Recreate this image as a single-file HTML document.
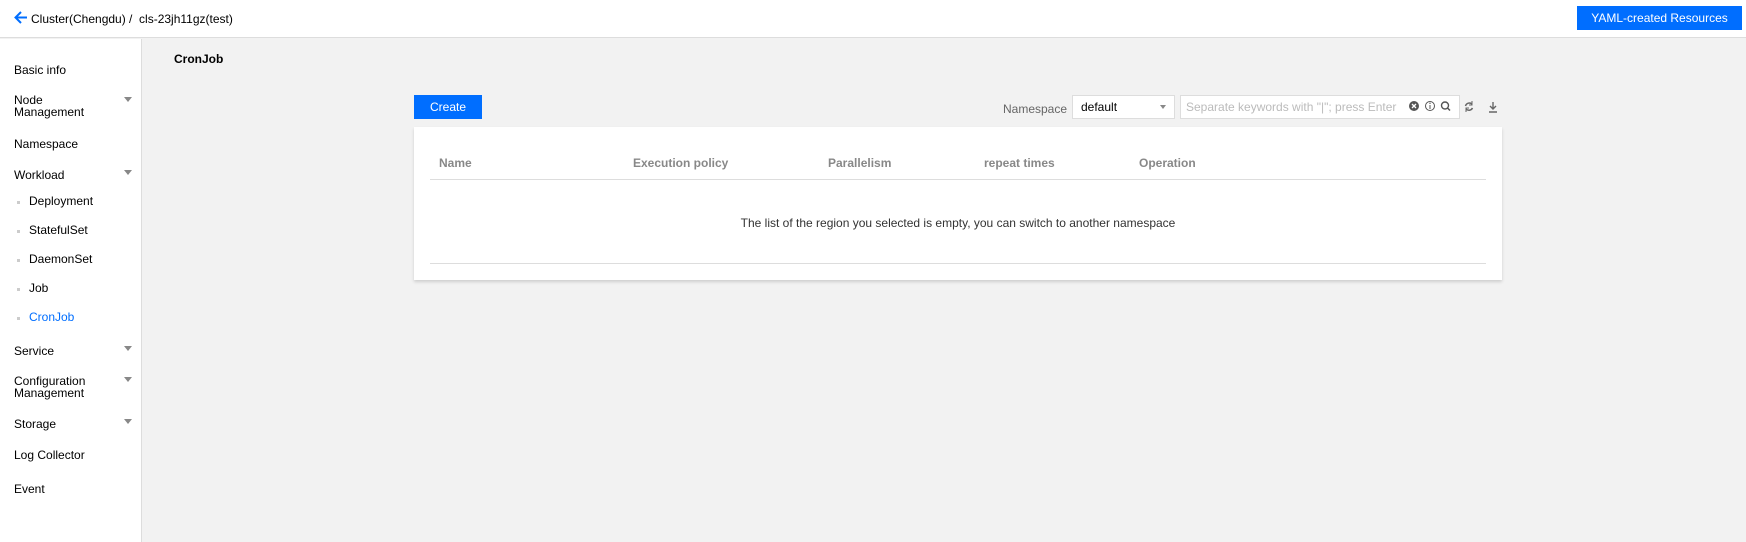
<!DOCTYPE html>
<html><head><meta charset="utf-8"><style>
*{margin:0;padding:0;box-sizing:border-box}
body{width:1746px;height:542px;background:#f2f2f2;font-family:"Liberation Sans",sans-serif;font-size:12px;color:#000;position:relative;overflow:hidden}
.a{position:absolute;white-space:nowrap}
.hdr{left:0;top:0;width:1746px;height:38px;background:#fff;border-bottom:1px solid #ddd}
.side{left:0;top:39px;width:142px;height:503px;background:#fff;border-right:1px solid #ddd}
.tri{position:absolute;left:124px;width:0;height:0;border-left:4px solid transparent;border-right:4px solid transparent;border-top:5px solid #888}
.bul{position:absolute;left:17px;width:3px;height:3px;background:#ccc}
.th{font-weight:bold;color:#888;top:156px}
</style></head><body>
<div class="a hdr"></div>
<svg class="a" style="left:14px;top:11px" width="14" height="13" viewBox="0 0 14 13"><path d="M7 1L1.5 6.5 7 12M1.5 6.5H13" stroke="#006eff" stroke-width="2" fill="none"/></svg>
<div class="a" style="left:31px;top:12px">Cluster(Chengdu) /&nbsp;&nbsp;cls-23jh11gz(test)</div>
<div class="a" style="left:1577px;top:6px;width:165px;height:24px;background:#006eff;color:#fff;text-align:center;line-height:24px">YAML-created Resources</div>
<div class="a side"></div>
<div class="a" style="left:14px;top:63px">Basic info</div>
<div class="a" style="left:14px;top:94px;line-height:12px">Node<br>Management</div><div class="tri" style="top:97px"></div>
<div class="a" style="left:14px;top:137px">Namespace</div>
<div class="a" style="left:14px;top:168px">Workload</div><div class="tri" style="top:170px"></div>
<div class="bul" style="top:201px"></div><div class="a" style="left:29px;top:194px">Deployment</div>
<div class="bul" style="top:230px"></div><div class="a" style="left:29px;top:223px">StatefulSet</div>
<div class="bul" style="top:259px"></div><div class="a" style="left:29px;top:252px">DaemonSet</div>
<div class="bul" style="top:288px"></div><div class="a" style="left:29px;top:281px">Job</div>
<div class="bul" style="top:317px"></div><div class="a" style="left:29px;top:310px;color:#006eff">CronJob</div>
<div class="a" style="left:14px;top:344px">Service</div><div class="tri" style="top:346px"></div>
<div class="a" style="left:14px;top:375px;line-height:12px">Configuration<br>Management</div><div class="tri" style="top:377px"></div>
<div class="a" style="left:14px;top:417px">Storage</div><div class="tri" style="top:419px"></div>
<div class="a" style="left:14px;top:448px">Log Collector</div>
<div class="a" style="left:14px;top:482px">Event</div>
<div class="a" style="left:174px;top:52px;font-weight:bold">CronJob</div>
<div class="a" style="left:414px;top:95px;width:68px;height:24px;background:#006eff;color:#fff;text-align:center;line-height:24px">Create</div>
<div class="a" style="left:1003px;top:102px;color:#666">Namespace</div>
<div class="a" style="left:1072px;top:95px;width:103px;height:24px;background:#fff;border:1px solid #ddd;padding-left:8px;line-height:23px">default</div>
<div class="a" style="left:1160px;top:105px;border-left:3px solid transparent;border-right:3px solid transparent;border-top:4px solid #888"></div>
<div class="a" style="left:1180px;top:95px;width:280px;height:24px;background:#fff;border:1px solid #ddd;padding-left:5px;line-height:23px;color:#bbb">Separate keywords with "|"; press Enter</div>
<svg class="a" style="left:1408px;top:100px" width="48" height="14"><circle cx="6" cy="6" r="5" fill="#555"/><path d="M4 4l4 4M8 4l-4 4" stroke="#fff" stroke-width="1.3"/><circle cx="22" cy="6" r="4.5" fill="none" stroke="#555"/><path d="M22 5v4" stroke="#555"/><circle cx="22" cy="3.3" r=".7" fill="#555"/><circle cx="37" cy="5.5" r="3.5" fill="none" stroke="#555" stroke-width="1.4"/><path d="M39.5 8l2.5 2.5" stroke="#555" stroke-width="1.5"/></svg>
<svg class="a" style="left:1463px;top:100px" width="40" height="14"><path d="M9 4A4 4 0 0 0 2.5 6M3 9a4 4 0 0 0 6.5-1" stroke="#666" stroke-width="1.5" fill="none"/><path d="M9 1v4H6M3 12V8h3" stroke="#666" fill="none"/><path d="M30 2v7M27 6l3 3 3-3M26 12h8" stroke="#666" stroke-width="1.4" fill="none"/></svg>
<div class="a" style="left:414px;top:127px;width:1088px;height:153px;background:#fff;box-shadow:0 2px 3px rgba(0,0,0,.15)"></div>
<div class="a th" style="left:439px">Name</div>
<div class="a th" style="left:633px">Execution policy</div>
<div class="a th" style="left:828px">Parallelism</div>
<div class="a th" style="left:984px">repeat times</div>
<div class="a th" style="left:1139px">Operation</div>
<div class="a" style="left:430px;top:179px;width:1056px;height:1px;background:#ddd"></div>
<div class="a" style="left:430px;top:216px;width:1056px;text-align:center;color:#333">The list of the region you selected is empty, you can switch to another namespace</div>
<div class="a" style="left:430px;top:263px;width:1056px;height:1px;background:#ddd"></div>
</body></html>
